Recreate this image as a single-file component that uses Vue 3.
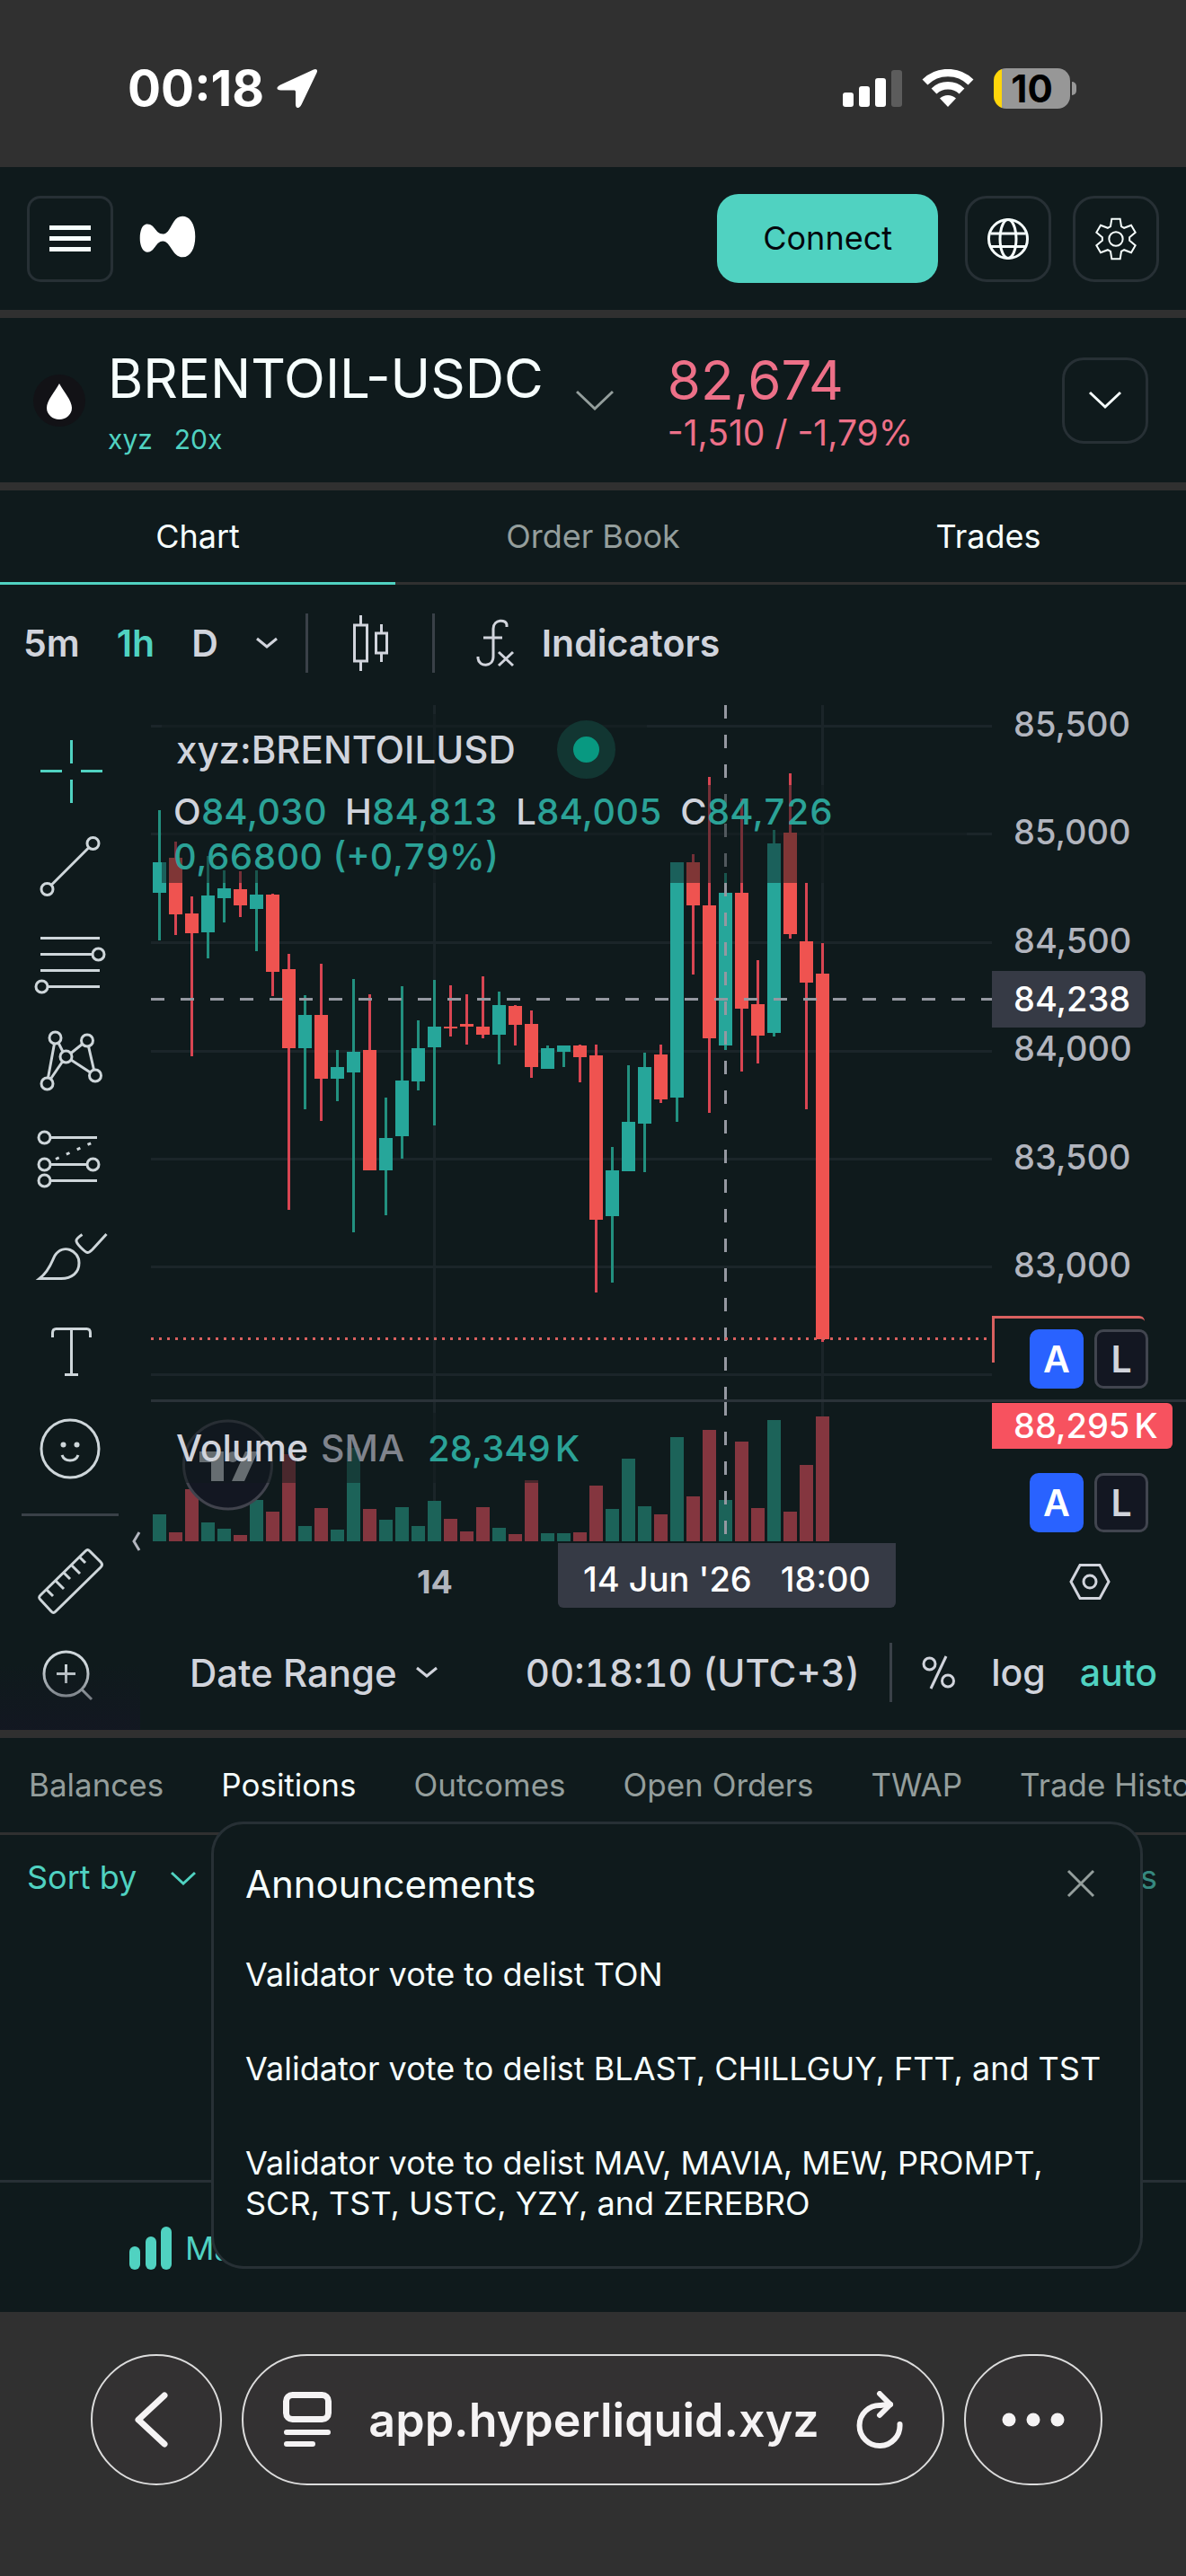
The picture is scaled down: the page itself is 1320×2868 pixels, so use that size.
<script setup>
// [direction, wick top, wick bottom, body top, body bottom, volume top]
const raw = [
  ['g', 902, 1047, 960, 994, 1686], ['r', 937, 1041, 955, 1018, 1706], ['r', 998, 1176, 1017, 1039, 1658],
  ['g', 953, 1067, 997, 1038, 1695], ['g', 969, 1027, 989, 1000, 1702], ['r', 970, 1021, 990, 1008, 1709],
  ['g', 969, 1059, 996, 1012, 1670], ['r', 995, 1109, 996, 1082, 1683], ['r', 1062, 1347, 1079, 1167, 1619],
  ['g', 1108, 1235, 1130, 1167, 1699], ['r', 1073, 1248, 1130, 1201, 1679], ['g', 1169, 1226, 1188, 1201, 1703],
  ['g', 1090, 1372, 1171, 1194, 1612], ['r', 1107, 1303, 1169, 1303, 1680], ['g', 1222, 1353, 1267, 1303, 1692],
  ['g', 1098, 1290, 1203, 1265, 1678], ['g', 1136, 1214, 1167, 1204, 1699], ['g', 1091, 1253, 1143, 1166, 1671],
  ['r', 1097, 1154, 1143, 1145, 1691], ['r', 1107, 1163, 1140, 1143, 1705], ['r', 1087, 1156, 1143, 1152, 1678],
  ['g', 1104, 1185, 1119, 1152, 1701], ['r', 1119, 1164, 1120, 1141, 1708], ['r', 1125, 1200, 1140, 1188, 1648],
  ['g', 1164, 1190, 1167, 1190, 1707], ['g', 1164, 1188, 1164, 1171, 1707], ['r', 1163, 1205, 1164, 1177, 1706],
  ['r', 1163, 1439, 1175, 1358, 1654], ['g', 1277, 1428, 1303, 1354, 1680], ['g', 1186, 1304, 1249, 1304, 1624],
  ['g', 1172, 1305, 1188, 1251, 1677], ['r', 1163, 1228, 1174, 1224, 1686], ['g', 960, 1249, 960, 1222, 1600],
  ['r', 951, 1085, 960, 1008, 1666], ['r', 865, 1239, 1008, 1156, 1592], ['g', 972, 1169, 994, 1164, 1670],
  ['r', 889, 1193, 994, 1123, 1605], ['r', 1069, 1184, 1118, 1153, 1679], ['g', 924, 1154, 939, 1150, 1581],
  ['r', 861, 1045, 927, 1040, 1683], ['r', 983, 1235, 1048, 1094, 1631], ['r', 1050, 1494, 1084, 1491, 1577],
]
const PRICE_TOP = 785
const VOLUME_TOP = 1561
const candles = raw.map(([dir, wt, wb, bt, bb, vt], i) => ({
  dir,
  x: 2 + i * 18,
  wickY: wt - PRICE_TOP,
  wickH: wb - wt,
  bodyY: bt - PRICE_TOP,
  bodyH: bb - bt,
  volY: vt - VOLUME_TOP,
  volH: 1716 - vt,
}))
const gridY = [23, 143, 264, 385, 505, 625, 745]
const gridX = [315, 747]
const PANE = 936

const prices = ['85,500', '85,000', '84,500', '84,000', '83,500', '83,000']
const viewTabs = [
  { label: 'Chart', state: 'active' },
  { label: 'Order Book', state: 'muted' },
  { label: 'Trades', state: '' },
]
const accountTabs = ['Balances', 'Positions', 'Outcomes', 'Open Orders', 'TWAP', 'Trade History']
const announcements = [
  'Validator vote to delist TON',
  'Validator vote to delist BLAST, CHILLGUY, FTT, and TST',
  'Validator vote to delist MAV, MAVIA, MEW, PROMPT, SCR, TST, USTC, YZY, and ZEREBRO',
]

// Six-toothed gear outline around (70, 70)
const gear = (() => {
  const pts = []
  for (let k = 0; k < 6; k++) {
    const a = (k * Math.PI) / 3
    for (const [x, y] of [[-18, -42], [-14, -67], [14, -67], [18, -42]]) {
      const px = 70 + x * Math.cos(a) - y * Math.sin(a)
      const py = 70 + x * Math.sin(a) + y * Math.cos(a)
      pts.push(px.toFixed(1) + ' ' + py.toFixed(1))
    }
  }
  return 'M' + pts.join('L') + 'Z'
})()
</script>

<template>
  <div class="phone">
    <header class="status">
      <div class="status-left">
        <span class="clock">00:18</span>
        <svg width="46" height="44" viewBox="0 0 46 44" aria-hidden="true">
          <path d="M41 1.500 4 18.500C-1 21-.5 24.500 4.500 24.500H19c1.500 0 2 .5 2 2V40c0 5 4 5.500 6.500.5L44.500 5C46 2 44-.2 41 1.500Z" fill="#fff" />
        </svg>
      </div>
      <div class="status-right">
        <svg width="66" height="42" viewBox="0 0 66 42" aria-hidden="true">
          <rect x="0" y="26" width="12" height="16" rx="3" fill="#fff" />
          <rect x="18" y="19" width="12" height="23" rx="3" fill="#fff" />
          <rect x="36" y="10" width="12" height="32" rx="3" fill="#fff" />
          <rect x="54" y="1" width="12" height="41" rx="3" fill="#5c5c5c" />
        </svg>
        <svg class="wifi" width="58" height="42" viewBox="0 0 58 42" aria-hidden="true">
          <path d="M29 42 20 32.500a13 13 0 0 1 18 0Z" fill="#fff" />
          <path d="M13.500 24.500a22.500 22.500 0 0 1 31 0" fill="none" stroke="#fff" stroke-width="8.500" />
          <path d="M3.500 14.500a36.500 36.500 0 0 1 51 0" fill="none" stroke="#fff" stroke-width="8.500" />
        </svg>
        <div class="battery-wrap">
          <span class="battery">10</span>
          <span class="battery-tip"></span>
        </div>
      </div>
    </header>

    <main class="app">
      <section class="topbar">
        <div class="brand">
          <button class="square menu" aria-label="Menu"><i></i><i></i><i></i></button>
          <svg class="logo" width="63" height="47" viewBox="46 118 190 142" aria-label="Hyperliquid">
            <path d="M73 147C98 147 101 180 125 180C154 180 154 120 191 120C220 120 234 152 234 189C234 228 218 258 192 258C156 258 152 204 125 204C101 204 98 241 74 241C58 241 48 220 48 194C48 166 57 147 73 147Z" fill="#fff" />
          </svg>
        </div>
        <div class="actions">
          <button class="connect">Connect</button>
          <button class="square round" aria-label="Language">
            <svg width="48" height="48" viewBox="0 0 48 48" fill="none" stroke="#f6fefd" stroke-width="3">
              <circle cx="24" cy="24" r="21.500" />
              <ellipse cx="24" cy="24" rx="9" ry="21.500" />
              <path d="M4.500 18h39M4.500 32.500h39" />
            </svg>
          </button>
          <button class="square round" aria-label="Settings">
            <svg width="48" height="48" viewBox="-2 -2 144 144" fill="none" stroke="#f6fefd" stroke-width="6">
              <path :d="gear" />
              <circle cx="70" cy="70" r="23" />
            </svg>
          </button>
        </div>
      </section>

      <section class="ticker">
        <svg class="coin" width="58" height="64" viewBox="0 0 58 64" aria-hidden="true">
          <circle cx="29" cy="32" r="29" fill="#121216" />
          <path d="M29 13C34 22 43 32 43 40a14 13 0 0 1-28 0C15 32 24 22 29 13Z" fill="#fff" />
        </svg>
        <div class="pair">
          <h1>BRENTOIL-USDC</h1>
          <p class="tags"><span>xyz</span><span>20x</span></p>
        </div>
        <svg class="pair-chev" width="42" height="24" viewBox="0 0 42 24" fill="none" stroke="#949e9c" stroke-width="3"><path d="M1 2 21 21 41 2" /></svg>
        <div class="quote">
          <strong>82,674</strong>
          <span>-1,510 / -1,79%</span>
        </div>
        <button class="square round expand" aria-label="Expand">
          <svg width="38" height="22" viewBox="0 0 38 22" fill="none" stroke="#f6fefd" stroke-width="3"><path d="M2 2 19 18 36 2" /></svg>
        </button>
      </section>

      <section class="chart-card">
        <nav class="view-tabs">
          <button v-for="t in viewTabs" :key="t.label" :class="t.state">{{ t.label }}</button>
        </nav>

        <div class="toolbar">
          <button>5m</button>
          <button class="teal">1h</button>
          <button>D</button>
          <svg class="tb-chev" width="26" height="14" viewBox="0 0 26 14" fill="none" stroke="#d1d4dc" stroke-width="3"><path d="M2 2 13 11 24 2" /></svg>
          <span class="vline"></span>
          <svg class="tb-candles" width="42" height="62" viewBox="0 0 42 62" fill="none" stroke="#d1d4dc" stroke-width="3">
            <path d="M9.500 0v11M9.500 51v11M32.500 10v11M32.500 42v10M2.500 11h14v40h-14zM26.500 20h12v22h-12z" />
          </svg>
          <span class="vline"></span>
          <svg class="tb-fx" width="44" height="54" viewBox="0 0 44 54" fill="none" stroke="#d1d4dc" stroke-width="3">
            <path d="M34 9V7C34 0 19 0 19 11V42C19 54 3 54 2 44V42M8 21H29M25 37 41 52M41 37 25 52" />
          </svg>
          <button>Indicators</button>
        </div>

        <div class="chart">
          <aside class="tools">
            <div class="tool-list">
              <svg viewBox="36 816 84 84"><path d="M79.500 824v26M79.500 868v26M45 858.500h24M90 858.500h24" stroke="#50d2c1" /></svg>
              <svg viewBox="36 924 84 84"><circle cx="52.500" cy="990" r="6.500" /><circle cx="103.500" cy="939" r="6.500" /><path d="M57 985.500 99 943.500" /></svg>
              <svg viewBox="36 1032 84 84"><path d="M45 1044.500h66M45 1062.500h57M45 1080.500h66M53 1098.500h58" /><circle cx="109.500" cy="1062.500" r="6.500" /><circle cx="46.500" cy="1098.500" r="6.500" /></svg>
              <svg viewBox="36 1140 84 84"><circle cx="61.500" cy="1155.500" r="6.500" /><circle cx="97" cy="1158.500" r="6.500" /><circle cx="73.500" cy="1176.500" r="6.500" /><circle cx="52.500" cy="1206.500" r="6.500" /><circle cx="106" cy="1197.500" r="6.500" /><path d="M60.500 1162 53.500 1200M65 1161 70 1171M91.500 1162.500 79 1172.500M98.500 1165 104.500 1191M79 1180 100.500 1194M69.500 1182 56.500 1201" /></svg>
              <svg viewBox="36 1248 84 84"><circle cx="49.500" cy="1266.500" r="6.500" /><circle cx="49.500" cy="1296.500" r="6.500" /><circle cx="103.500" cy="1296.500" r="6.500" /><circle cx="49.500" cy="1314.500" r="6.500" /><path d="M56 1266.500h52M56 1296.500h41M56 1314.500h52" /><path d="M62 1290.500 104 1271.500" stroke-dasharray="4 9" /></svg>
              <svg viewBox="36 1356 84 84"><path d="M44 1423.500C56 1414 58 1403 61 1398C70 1384 88 1392 88 1406C88 1417 80 1423.500 68 1423.500ZM91.500 1374.500C83 1380 83 1382 90 1389C97 1396 98 1396 103 1391L118.500 1374" /></svg>
              <svg viewBox="36 1464 84 84"><path d="M58.500 1489v-5c0-3 1-4.500 4-4.500h34c3 0 4 1.500 4 4.500v5M79.500 1480v51M72 1530.500h15" /></svg>
              <svg viewBox="36 1572 84 84"><circle cx="78" cy="1613" r="32" /><path d="M69 1620c3 8 15 8 18 0" /><circle class="dot" cx="70.500" cy="1608.500" r="3" /><circle class="dot" cx="85.500" cy="1608.500" r="3" /></svg>
            </div>
            <span class="tool-sep"></span>
            <div class="tool-list">
              <svg viewBox="36 1718 84 84"><path d="M95 1727 45 1776c-2 2-2 3 0 5l12 13c2 2 3 2 5 0l50-49c2-2 2-4 0-6l-12-12c-2-2-3-2-5 0ZM52 1770l7 7M62 1760l9 9M71 1751l7 7M80 1743l9 9M89 1734l6 6" /></svg>
              <svg viewBox="36 1826 84 84"><circle cx="73.500" cy="1863.500" r="24.500" /><path d="M63 1863.500h21M73.500 1853v21M91 1881 102 1892" /></svg>
            </div>
            <div class="tools-fade"></div>
            <svg class="pane-toggle" width="10" height="22" viewBox="0 0 10 22" fill="none" stroke="#b2b5be" stroke-width="3"><path d="M8 1 2 11 8 21" /></svg>
          </aside>

          <div class="panes">
            <div class="row">
              <div class="pane">
                <svg class="plot" viewBox="0 0 936 773">
                  <rect v-for="y in gridY" :key="'h' + y" class="grid" x="0" :y="y - 1" width="936" height="3" />
                  <rect v-for="x in gridX" :key="'v' + x" class="grid" :x="x - 1" y="0" width="3" height="773" />
                  <g v-for="c in candles" :key="c.x" :class="c.dir">
                    <rect class="wick" :x="c.x + 6" :y="c.wickY" width="3" :height="c.wickH" />
                    <rect :x="c.x" :y="c.bodyY" width="15" :height="c.bodyH" />
                  </g>
                  <path class="cross" d="M0 327.500H936" />
                  <path class="cross" d="M639.500 0V773" />
                  <path d="M0 705.500H936" stroke="#d9605f" stroke-width="3" stroke-dasharray="3 6" />
                </svg>
                <div class="legend legend-title">
                  <span>xyz:BRENTOILUSD</span>
                  <span class="live"></span>
                </div>
                <div class="legend legend-ohlc">
                  <div class="ohlc">
                    <span>O<b>84,030</b></span><span>H<b>84,813</b></span><span>L<b>84,005</b></span><span>C<b>84,726</b></span>
                  </div>
                  <div><b>0,66800 (+0,79%)</b></div>
                </div>
              </div>
              <div class="scale">
                <ul class="prices"><li v-for="p in prices" :key="p">{{ p }}</li></ul>
                <div class="tag tag-cross">84,238</div>
                <div class="last-outline"></div>
                <div class="al"><button class="on">A</button><button>L</button></div>
              </div>
            </div>

            <div class="row volume-row">
              <div class="pane">
                <svg class="plot" viewBox="0 0 936 157">
                  <rect v-for="x in gridX" :key="x" class="grid" :x="x - 1" y="0" width="3" height="155" />
                  <rect v-for="c in candles" :key="c.x" :class="'vol-' + c.dir" :x="c.x" :y="c.volY" width="15" :height="c.volH" />
                  <path class="cross" d="M639.500 0V148" />
                  <circle cx="85.500" cy="70" r="49" fill="#131722" stroke="#41434d" stroke-width="3" />
                  <path d="M54 55H81V88H67V67H54ZM105 55H119L104 88H90Z" fill="#bdc0c7" />
                  <circle cx="91" cy="61" r="6" fill="#bdc0c7" />
                </svg>
                <div class="legend legend-vol">
                  <span>Volume</span><span class="sma">SMA</span><b>28,349<span class="unit">K</span></b>
                </div>
              </div>
              <div class="scale">
                <div class="tag tag-vol">88,295<span class="unit">K</span></div>
                <div class="al al-vol"><button class="on">A</button><button>L</button></div>
              </div>
            </div>

            <div class="row time-row">
              <div class="pane">
                <span class="day" :style="{ left: (316 / PANE) * 100 + '%' }">14</span>
                <span class="moment" :style="{ left: (641 / PANE) * 100 + '%' }"><span>14 Jun '26</span><span>18:00</span></span>
              </div>
              <div class="scale gearcell">
                <svg width="46" height="42" viewBox="0 0 46 42" fill="none" stroke="#d1d4dc" stroke-width="3">
                  <path d="M12 2.500H34L44 21 34 39.500H12L2 21Z" /><circle cx="23" cy="21" r="7" />
                </svg>
              </div>
            </div>

            <div class="bottom-bar">
              <button class="range">Date Range
                <svg width="26" height="14" viewBox="0 0 26 14" fill="none" stroke="#d1d4dc" stroke-width="3"><path d="M2 2 13 11 24 2" /></svg>
              </button>
              <div class="bb-right">
                <span class="utc">00:18:10 (UTC+3)</span>
                <span class="vline"></span>
                <svg class="pct" width="38" height="38" viewBox="0 0 38 38" fill="none" stroke="#d1d4dc" stroke-width="3">
                  <circle cx="8.500" cy="9.500" r="6.500" /><circle cx="29" cy="28.500" r="6.500" /><path d="M27 1 10 37" />
                </svg>
                <button>log</button>
                <button class="teal">auto</button>
              </div>
            </div>
          </div>
        </div>
      </section>

      <section class="account">
        <nav class="account-tabs">
          <button v-for="t in accountTabs" :key="t" :class="{ active: t === 'Positions' }">{{ t }}</button>
        </nav>
        <div class="sort">
          <button class="sort-by">Sort by
            <svg width="28" height="16" viewBox="0 0 28 16" fill="none" stroke="#50d2c1" stroke-width="3"><path d="M1 2 14 14 27 2" /></svg>
          </button>
          <span class="sort-end">s</span>
        </div>

        <div class="dialog" role="dialog" aria-labelledby="ann">
          <div class="dialog-head">
            <h2 id="ann">Announcements</h2>
            <button aria-label="Close">
              <svg width="32" height="32" viewBox="0 0 32 32" fill="none" stroke="#949e9c" stroke-width="3"><path d="M2 2 30 30M30 2 2 30" /></svg>
            </button>
          </div>
          <ul><li v-for="a in announcements" :key="a">{{ a }}</li></ul>
        </div>
      </section>

      <nav class="dock">
        <a href="#markets">
          <svg width="48" height="50" viewBox="0 0 48 50" fill="#50d2c1" aria-hidden="true">
            <rect x="0" y="23" width="12" height="26" rx="6" /><rect x="18" y="12" width="12" height="37" rx="6" /><rect x="35" y="1" width="12" height="48" rx="6" />
          </svg>
          Markets
        </a>
      </nav>
    </main>

    <footer class="browser">
      <button class="glass circle" aria-label="Back">
        <svg width="40" height="64" viewBox="0 0 40 64" fill="none" stroke="#f5f3f4" stroke-width="7" stroke-linecap="round" stroke-linejoin="round"><path d="M34 5 5 32 34 59" /></svg>
      </button>
      <div class="glass url">
        <svg width="54" height="62" viewBox="0 0 54 62" fill="none" stroke="#f5f3f4" stroke-width="7" stroke-linecap="round">
          <rect x="3.500" y="3.500" width="47" height="27" rx="7" /><path d="M4 45H50M4 58H33" stroke-width="6" />
        </svg>
        <span>app.hyperliquid.xyz</span>
        <svg width="52" height="64" viewBox="0 0 52 64" fill="none" stroke="#f5f3f4" stroke-width="6" stroke-linecap="round" stroke-linejoin="round">
          <path d="M48.500 37A22.500 22.500 0 1 1 27 16C31 15.500 35 15 38 15" /><path d="M26 3 38 15 26 27" />
        </svg>
      </div>
      <button class="glass more" aria-label="More">
        <svg width="70" height="16" viewBox="0 0 70 16" fill="#f5f3f4"><circle cx="8" cy="8" r="7.500" /><circle cx="35" cy="8" r="7.500" /><circle cx="62" cy="8" r="7.500" /></svg>
      </button>
    </footer>
  </div>
</template>

<style>
body {
  margin: 0;
  background: #303030;
}
</style>

<style scoped>
* {
  box-sizing: border-box;
}
.phone {
  font-family: Inter, 'Liberation Sans', sans-serif;
  font-size: 36px;
  line-height: 45px;
  color: #f6fefd;
  background: #303030;
  overflow: hidden;
}
button {
  font: inherit;
  color: inherit;
  background: none;
  border: 0;
  padding: 0;
  margin: 0;
}
h1, h2, p, ul {
  margin: 0;
  padding: 0;
  list-style: none;
  font-weight: 400;
}
svg {
  flex: none;
}
.teal {
  color: #50d2c1;
}

/* Status bar */
.status {
  height: 186px;
  padding: 10px 122px 0 142px;
  display: flex;
  justify-content: space-between;
  align-items: center;
}
.status-left, .status-right {
  display: flex;
  align-items: center;
}
.status-left {
  gap: 14px;
}
.clock {
  font-size: 55px;
  font-weight: 700;
  color: #fff;
}
.wifi {
  margin: 0 22px;
}
.battery-wrap {
  display: flex;
  align-items: center;
  gap: 2px;
}
.battery {
  width: 85px;
  height: 45px;
  border-radius: 14px;
  background: linear-gradient(90deg, #ffd60a 9px, #979797 9px);
  color: #000;
  font-size: 42px;
  font-weight: 700;
  text-align: center;
}
.battery-tip {
  width: 5px;
  height: 15px;
  border-radius: 0 5px 5px 0;
  background: #979797;
}

/* Top bar */
.app {
  background: #303030;
  display: flex;
  flex-direction: column;
  gap: 9px;
}
.topbar, .ticker, .chart-card, .account, .dock {
  background: #0f1a1c;
}
.topbar {
  height: 159px;
  padding: 0 30px;
  display: flex;
  align-items: center;
  justify-content: space-between;
}
.brand, .actions {
  display: flex;
  align-items: center;
}
.brand {
  gap: 29px;
}
.logo {
  margin-bottom: 4px;
}
.actions {
  gap: 24px;
}
.square {
  width: 96px;
  height: 96px;
  border: 3px solid #273035;
  border-radius: 15px;
  display: flex;
  align-items: center;
  justify-content: center;
}
.round {
  border-radius: 24px;
}
.menu {
  flex-direction: column;
  gap: 7px;
}
.menu i {
  width: 46px;
  height: 5px;
  background: #f6fefd;
}
.connect {
  height: 99px;
  padding: 0 51px;
  border-radius: 24px;
  background: #50d2c1;
  color: #04060c;
  margin-right: 6px;
}

/* Ticker */
.ticker {
  height: 183px;
  padding: 0 42px 0 37px;
  display: flex;
  align-items: center;
}
.coin {
  margin-right: 25px;
}
.pair h1, .quote strong {
  display: block;
  font-size: 60px;
  line-height: 72px;
  font-weight: 400;
}
.tags {
  display: flex;
  gap: 24px;
  font-size: 30px;
  line-height: 36px;
  margin-top: 14px;
  color: #50d2c1;
}
.pair-chev {
  margin: 0 60px 0 36px;
}
.quote {
  color: #ed7088;
}
.quote span {
  display: block;
  font-size: 39px;
  line-height: 45px;
}
.expand {
  margin-left: auto;
}

/* Chart */
.view-tabs {
  display: flex;
  border-bottom: 3px solid #303030;
}
.view-tabs button {
  flex: 1;
  height: 105px;
  margin-bottom: -3px;
  border-bottom: 3px solid transparent;
}
.view-tabs .active {
  border-color: #50d2c1;
}
.view-tabs .muted {
  color: #949e9c;
}
.toolbar {
  height: 130px;
  padding-left: 26px;
  display: flex;
  align-items: center;
  font-size: 41px;
  font-weight: 600;
  color: #d1d4dc;
}
.toolbar button {
  margin-right: 41px;
}
.tb-chev {
  margin-right: 30px;
}
.vline {
  width: 3px;
  height: 66px;
  background: #3a4148;
}
.tb-candles {
  margin: 0 47px 0 49px;
}
.tb-fx {
  margin: 0 29px 0 46px;
}
.chart {
  display: flex;
  padding-top: 4px;
  color: #d1d4dc;
}
.tools {
  width: 168px;
  flex: none;
  position: relative;
  padding: 19px 12px 4px 0;
}
.tool-list {
  display: flex;
  flex-direction: column;
  align-items: center;
  gap: 24px;
  padding: 12px 0;
}
.tool-list svg {
  width: 84px;
  height: 84px;
  fill: none;
  stroke: #ced6da;
  stroke-width: 3;
}
.tool-list .dot {
  fill: #ced6da;
  stroke: none;
}
.tool-sep {
  display: block;
  height: 3px;
  margin: 17px 24px 18px;
  background: #3a4148;
}
.tools-fade {
  position: absolute;
  left: 0;
  right: 12px;
  bottom: 0;
  height: 72px;
  background: linear-gradient(180deg, rgba(19, 23, 34, 0), rgba(19, 23, 34, 0.9));
}
.pane-toggle {
  position: absolute;
  right: 11px;
  bottom: 199px;
}
.panes {
  flex: 1;
  min-width: 0;
}
.row {
  display: flex;
}
.pane {
  flex: 1;
  min-width: 0;
  position: relative;
}
.plot {
  display: block;
  width: 100%;
  height: auto;
}
.scale {
  width: 216px;
  flex: none;
  position: relative;
}
.grid {
  fill: #1b2529;
}
.g {
  fill: #26a69a;
}
.g .wick {
  fill: #22907f;
}
.r {
  fill: #ef5350;
}
.r .wick {
  fill: #d84552;
}
.vol-g {
  fill: #1c6359;
}
.vol-r {
  fill: #84363f;
}
.cross {
  stroke: #9598a1;
  stroke-width: 3;
  stroke-dasharray: 15 18;
}
.legend {
  position: absolute;
  left: 12px;
  background: rgba(15, 26, 28, 0.5);
  font-weight: 500;
}
.legend b {
  font-weight: 500;
  color: #2ba297;
}
.unit {
  margin-left: 5px;
}
.legend-title {
  top: 10px;
  height: 79px;
  padding: 0 35px 0 16px;
  display: flex;
  align-items: center;
  gap: 46px;
  font-size: 42px;
}
.live {
  width: 65px;
  height: 65px;
  border-radius: 50%;
  border: 18px solid #123632;
  background: #089981;
}
.legend-ohlc {
  top: 89px;
  right: 28px;
  padding: 5px 13px 4px;
  font-size: 40px;
  line-height: 50px;
  font-variant-numeric: tabular-nums;
}
.ohlc {
  display: flex;
  gap: 20px;
}
.prices {
  display: flex;
  flex-direction: column;
  justify-content: space-between;
  height: 644px;
  padding-left: 24px;
  font-size: 38px;
  line-height: 42px;
  font-weight: 500;
  color: #b2b5be;
}
.tag {
  position: absolute;
  left: 0;
  padding-left: 24px;
  color: #fff;
  font-size: 38px;
  font-weight: 500;
}
.tag-cross {
  top: 296px;
  width: 171px;
  line-height: 63px;
  background: #363a45;
  border-radius: 0 6px 6px 0;
}
.last-outline {
  position: absolute;
  top: 680px;
  left: 0;
  width: 170px;
  height: 52px;
  border: solid #d9605f;
  border-width: 3px 0 0 3px;
  border-radius: 0 6px 0 0;
}
.al {
  display: flex;
  gap: 12px;
  padding: 51px 0 0 42px;
}
.al button {
  width: 60px;
  height: 66px;
  border: 3px solid #41454f;
  border-radius: 10px;
  background: #131722;
  color: #d1d4dc;
  font-size: 41px;
  font-weight: 600;
  position: relative;
}
.al .on {
  background: #2962ff;
  border-color: #2962ff;
  color: #fff;
}
.volume-row {
  border-top: 3px solid #2a3238;
}
.legend-vol {
  top: 12px;
  height: 78px;
  padding: 0 16px;
  display: flex;
  align-items: center;
  gap: 14px;
  font-size: 41px;
}
.sma {
  color: #80848d;
}
.legend-vol b {
  margin-left: 12px;
  font-size: 40px;
}
.tag-vol {
  top: 1px;
  width: 201px;
  line-height: 51px;
  background: #f7525f;
  border-radius: 0 6px 6px 0;
}
.al-vol {
  padding-top: 79px;
}
.time-row {
  height: 80px;
}
.day, .moment {
  position: absolute;
  top: 0;
  transform: translateX(-50%);
  white-space: nowrap;
}
.day {
  line-height: 86px;
  font-weight: 700;
  color: #b2b5be;
}
.moment {
  display: flex;
  gap: 32px;
  padding: 8px 28px 0;
  line-height: 64px;
  font-size: 38px;
  font-weight: 500;
  color: #fff;
  background: #363a45;
  border-radius: 0 0 6px 6px;
}
.gearcell {
  padding: 22px 0 0 86px;
}
.bottom-bar {
  height: 128px;
  padding: 0 32px 0 43px;
  display: flex;
  align-items: center;
  justify-content: space-between;
  font-size: 41px;
  font-weight: 500;
}
.range {
  display: flex;
  align-items: center;
  gap: 20px;
  font-size: 42px;
}
.utc {
  font-size: 42px;
  font-variant-numeric: tabular-nums;
}
.bb-right {
  display: flex;
  align-items: center;
}
.bb-right .vline {
  margin: 0 33px;
}
.pct {
  margin-right: 39px;
}
.bb-right button + button {
  margin-left: 38px;
}

/* Account */
.account {
  height: 492px;
  position: relative;
}
.account-tabs {
  display: flex;
  overflow: hidden;
  border-bottom: 3px solid #303030;
  color: #949e9c;
  font-size: 35px;
}
.account-tabs button {
  flex: none;
  height: 108px;
  padding: 0 32px;
  border-bottom: 3px solid transparent;
  margin-bottom: -3px;
  position: relative;
}
.account-tabs .active {
  color: #f6fefd;
  border-color: #50d2c1;
}
.sort {
  display: flex;
  justify-content: space-between;
  padding: 25px 32px 0 30px;
  color: #50d2c1;
}
.sort-by {
  display: flex;
  align-items: center;
  gap: 38px;
}
.sort-end {
  opacity: 0.6;
}
.dialog {
  position: absolute;
  z-index: 1;
  top: 93px;
  left: 235px;
  right: 48px;
  padding: 42px 35px 47px;
  border: 3px solid #273035;
  border-radius: 36px;
  background: #0f1a1c;
}
.dialog-head {
  display: flex;
  align-items: center;
  justify-content: space-between;
  padding-right: 15px;
  height: 48px;
}
.dialog-head button {
  display: flex;
}
h2 {
  font-size: 42px;
}
.dialog ul {
  margin-top: 55px;
  display: flex;
  flex-direction: column;
  gap: 60px;
}
.dock {
  margin-top: -9px;
  height: 147px;
  border-top: 3px solid #273035;
  padding: 48px 0 0 144px;
}
.dock a {
  display: inline-flex;
  align-items: center;
  gap: 14px;
  color: #50d2c1;
  text-decoration: none;
}

/* Browser bar */
.browser {
  height: 294px;
  padding: 47px 93px 0 101px;
  display: flex;
  gap: 22px;
}
.glass {
  height: 146px;
  border: 2px solid #dcdcdc;
  border-radius: 73px;
  background: #333132;
  display: flex;
  align-items: center;
  justify-content: center;
}
.circle {
  width: 146px;
  padding-right: 10px;
}
.url {
  flex: 1;
  justify-content: space-between;
  padding: 0 44px;
  font-size: 52px;
  font-weight: 600;
  color: #f5f3f4;
}
.more {
  width: 154px;
}
</style>
